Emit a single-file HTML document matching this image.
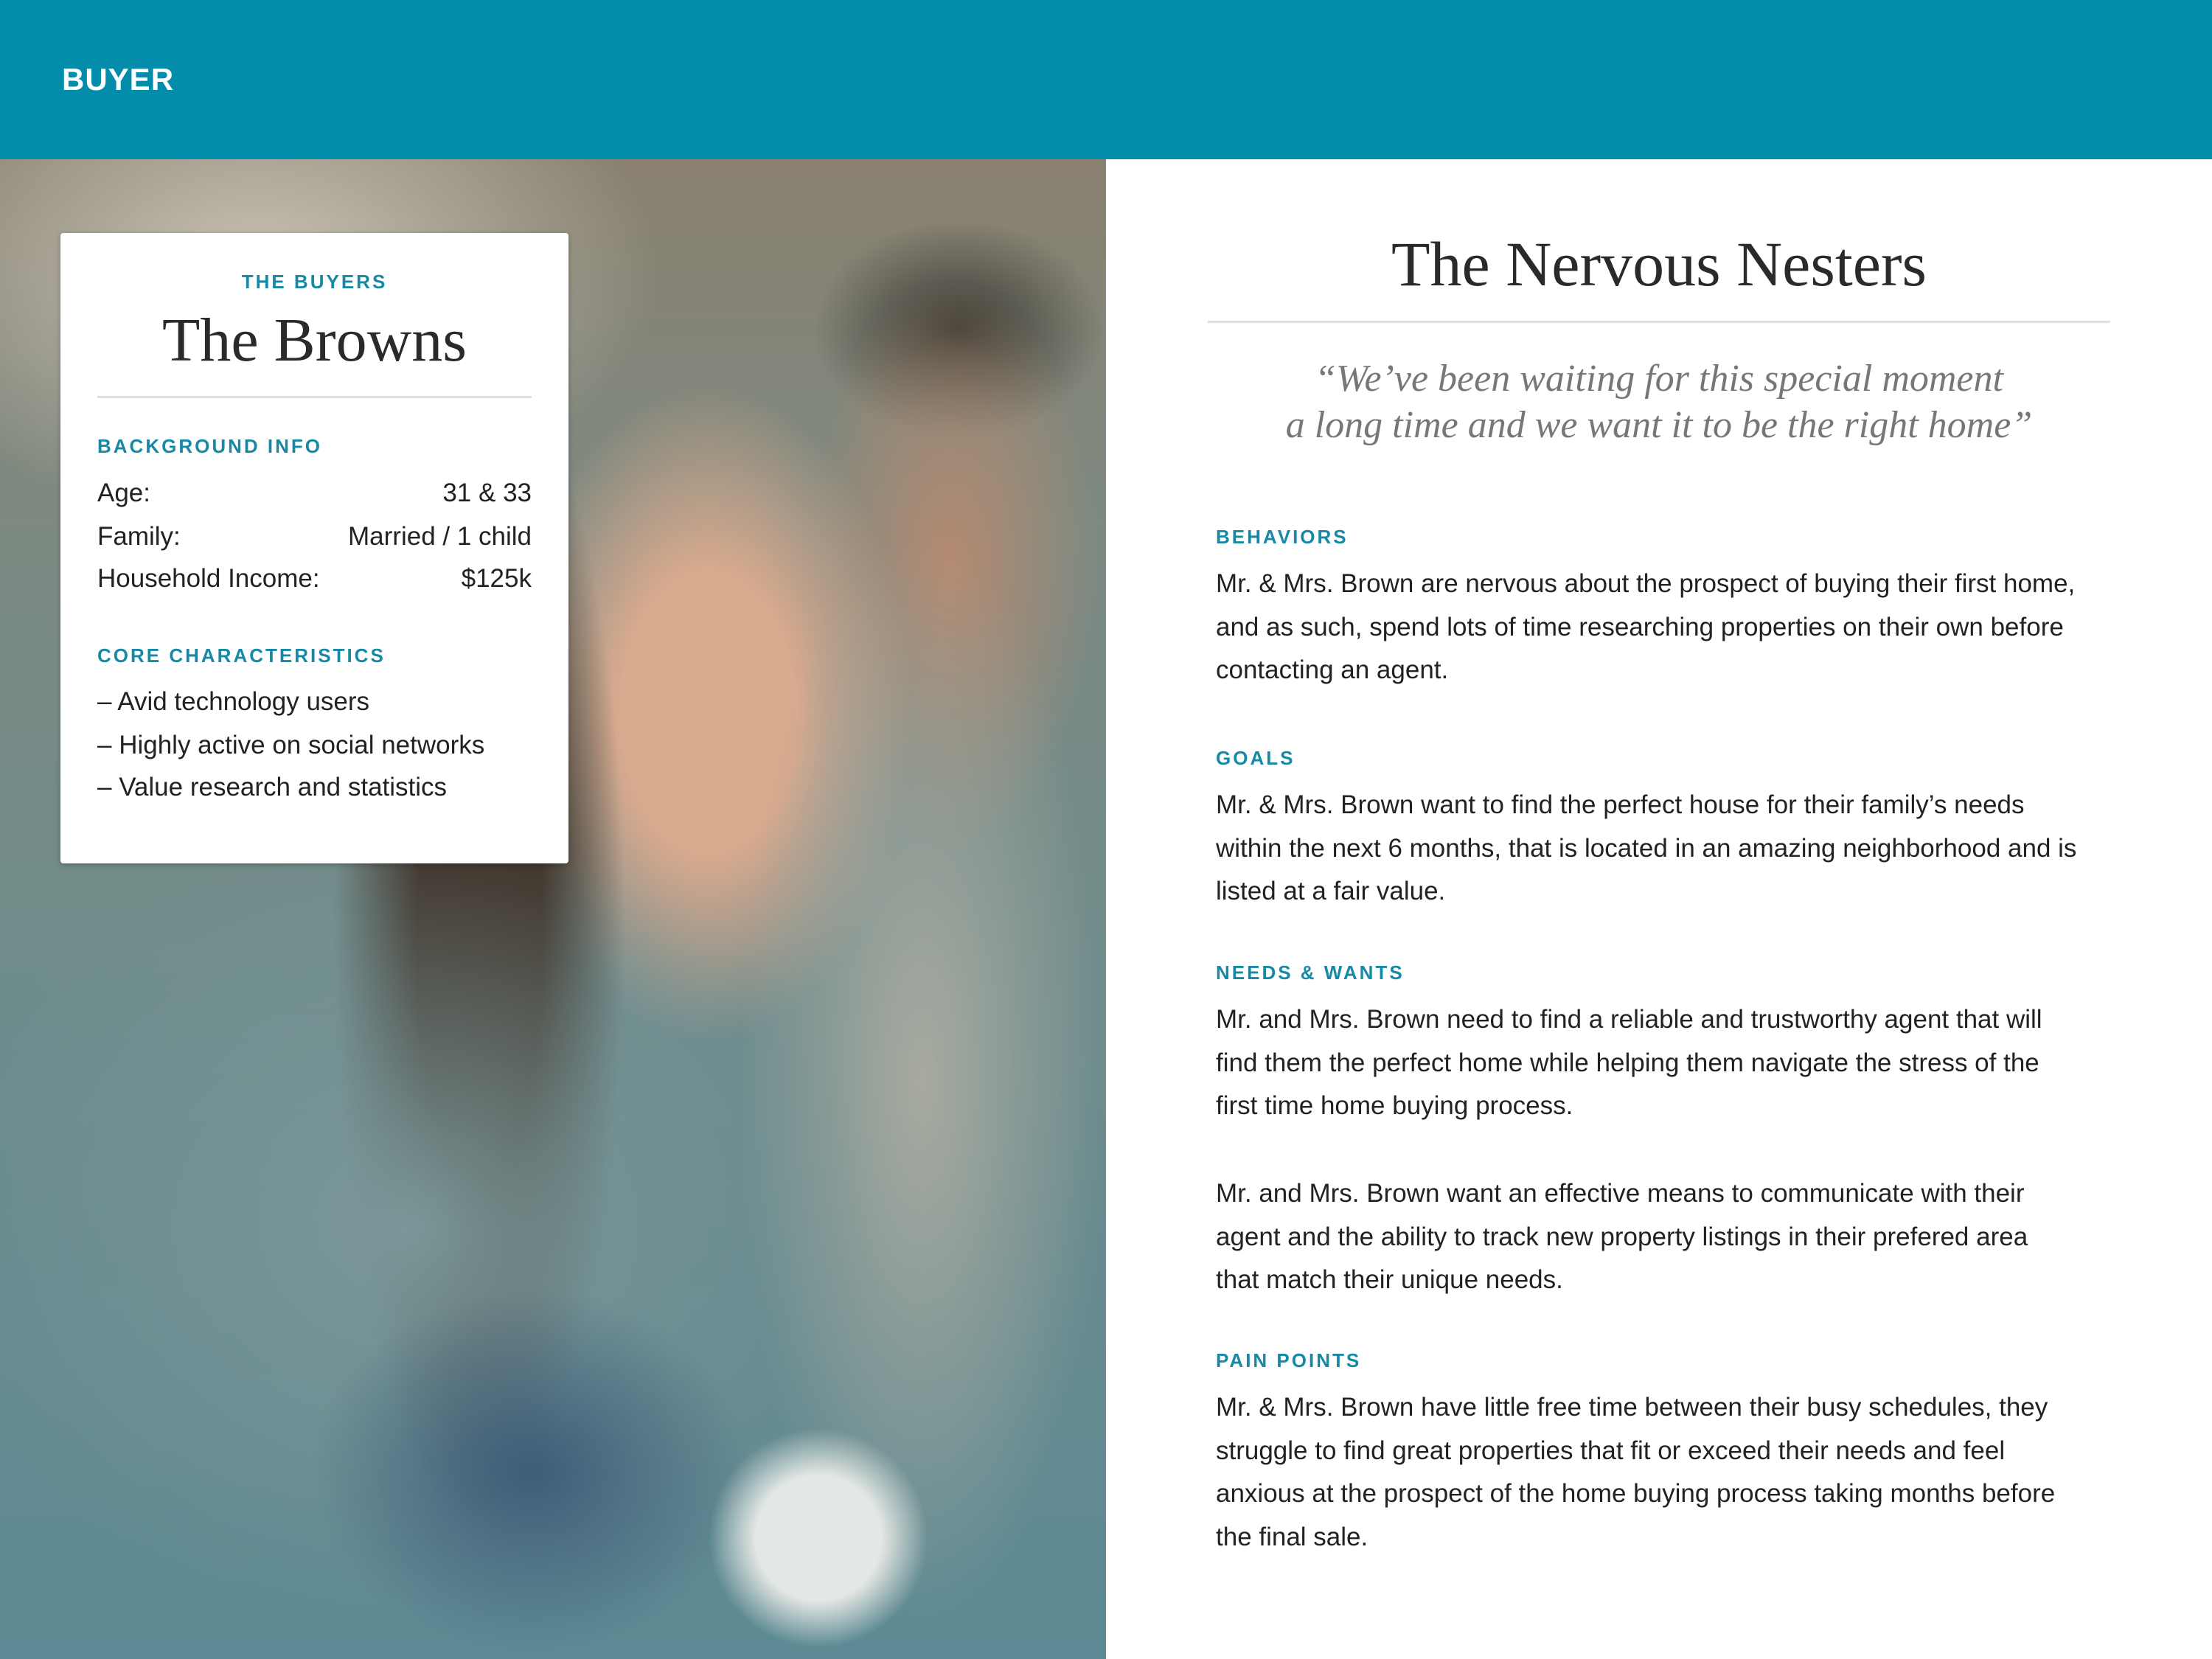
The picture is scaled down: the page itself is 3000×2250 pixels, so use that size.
<!DOCTYPE html>
<html><head><meta charset="utf-8"><style>
*{margin:0;padding:0;box-sizing:border-box}
html,body{width:3000px;height:2250px;overflow:hidden}
body{position:relative;background:#fff;font-family:"Liberation Sans",sans-serif;color:#222}
.hdr{position:absolute;left:0;top:0;width:3000px;height:216px;background:#038dab}
.hdr span{position:absolute;left:84px;top:84px;font-size:42px;font-weight:bold;color:#fff;letter-spacing:1px}
.photo{position:absolute;left:0;top:216px;width:1500px;height:2034px;overflow:hidden;
background:linear-gradient(180deg,#8a8170 0%,#7d8a82 25%,#6f8c8c 55%,#5d8a94 100%)}
.photo div{position:absolute;border-radius:50%}
.a{position:absolute;white-space:nowrap}
.card{position:absolute;left:82px;top:316px;width:689px;height:855px;background:#fff;border-radius:4px;box-shadow:0 2px 8px rgba(0,0,0,.25)}
.lab{font-size:26px;font-weight:bold;color:#1689a6;letter-spacing:3px;line-height:30px}
.body{font-size:35px;line-height:40px;color:#222}
.ser{font-family:"Liberation Serif",serif}
</style></head><body>
<div class="hdr"><span>BUYER</span></div>
<div class="photo">
 <div style="left:-200px;top:-200px;width:1100px;height:700px;background:radial-gradient(#c9c2b5,transparent 70%)"></div>
 <div style="left:1100px;top:80px;width:400px;height:300px;background:radial-gradient(#3b3a33,transparent 70%)"></div>
 <div style="left:1080px;top:150px;width:420px;height:800px;background:radial-gradient(#b58a70,transparent 68%)"></div>
 <div style="left:680px;top:300px;width:560px;height:900px;background:radial-gradient(#d8aa8e 30%,transparent 70%)"></div>
 <div style="left:450px;top:250px;width:400px;height:1600px;background:radial-gradient(#3f3228 30%,transparent 70%)"></div>
 <div style="left:1000px;top:500px;width:500px;height:1500px;background:radial-gradient(#a8aaa0,transparent 70%)"></div>
 <div style="left:-100px;top:900px;width:1300px;height:1100px;background:radial-gradient(#7a9698,transparent 70%)"></div>
 <div style="left:420px;top:1530px;width:600px;height:500px;background:radial-gradient(#3d5c78,transparent 70%)"></div>
 <div style="left:960px;top:1720px;width:300px;height:300px;background:radial-gradient(#e4e8e4 40%,transparent 70%)"></div>
</div>
<div class="card">
 <div class="a lab" style="left:0;width:689px;text-align:center;top:51px">THE BUYERS</div>
 <div class="a ser" style="left:0;width:689px;text-align:center;top:96px;font-size:84px;line-height:100px;color:#2a2a2a">The Browns</div>
 <div class="a" style="left:50px;top:221px;width:589px;height:3px;background:#dde0e3"></div>
 <div class="a lab" style="left:50px;top:274px">BACKGROUND INFO</div>
 <div class="a body" style="left:50px;top:333px">Age:</div><div class="a body" style="right:50px;top:333px">31 &amp; 33</div>
 <div class="a body" style="left:50px;top:392px">Family:</div><div class="a body" style="right:50px;top:392px">Married / 1 child</div>
 <div class="a body" style="left:50px;top:449px">Household Income:</div><div class="a body" style="right:50px;top:449px">$125k</div>
 <div class="a lab" style="left:50px;top:558px">CORE CHARACTERISTICS</div>
 <div class="a body" style="left:50px;top:616px">– Avid technology users</div>
 <div class="a body" style="left:50px;top:675px">– Highly active on social networks</div>
 <div class="a body" style="left:50px;top:732px">– Value research and statistics</div>
</div>
<div class="a ser" style="left:1638px;width:1224px;text-align:center;top:308px;font-size:86px;line-height:100px;color:#2a2a2a">The Nervous Nesters</div>
<div class="a" style="left:1638px;top:435px;width:1224px;height:3px;background:#dde0e3"></div>
<div class="a ser" style="left:1638px;width:1224px;text-align:center;top:482px;font-size:52px;line-height:63px;font-style:italic;color:#777">“We’ve been waiting for this special moment<br>a long time and we want it to be the right home”</div>
<div class="a lab" style="left:1649px;top:713px">BEHAVIORS</div>
<div class="a body" style="left:1649px;top:763px;line-height:58.5px">Mr. &amp; Mrs. Brown are nervous about the prospect of buying their first home,<br>and as such, spend lots of time researching properties on their own before<br>contacting an agent.</div>
<div class="a lab" style="left:1649px;top:1013px">GOALS</div>
<div class="a body" style="left:1649px;top:1063px;line-height:58.5px">Mr. &amp; Mrs. Brown want to find the perfect house for their family’s needs<br>within the next 6 months, that is located in an amazing neighborhood and is<br>listed at a fair value.</div>
<div class="a lab" style="left:1649px;top:1304px">NEEDS &amp; WANTS</div>
<div class="a body" style="left:1649px;top:1354px;line-height:58.5px">Mr. and Mrs. Brown need to find a reliable and trustworthy agent that will<br>find them the perfect home while helping them navigate the stress of the<br>first time home buying process.</div>
<div class="a body" style="left:1649px;top:1590px;line-height:58.5px">Mr. and Mrs. Brown want an effective means to communicate with their<br>agent and the ability to track new property listings in their prefered area<br>that match their unique needs.</div>
<div class="a lab" style="left:1649px;top:1830px">PAIN POINTS</div>
<div class="a body" style="left:1649px;top:1880px;line-height:58.5px">Mr. &amp; Mrs. Brown have little free time between their busy schedules, they<br>struggle to find great properties that fit or exceed their needs and feel<br>anxious at the prospect of the home buying process taking months before<br>the final sale.</div>
</body></html>
